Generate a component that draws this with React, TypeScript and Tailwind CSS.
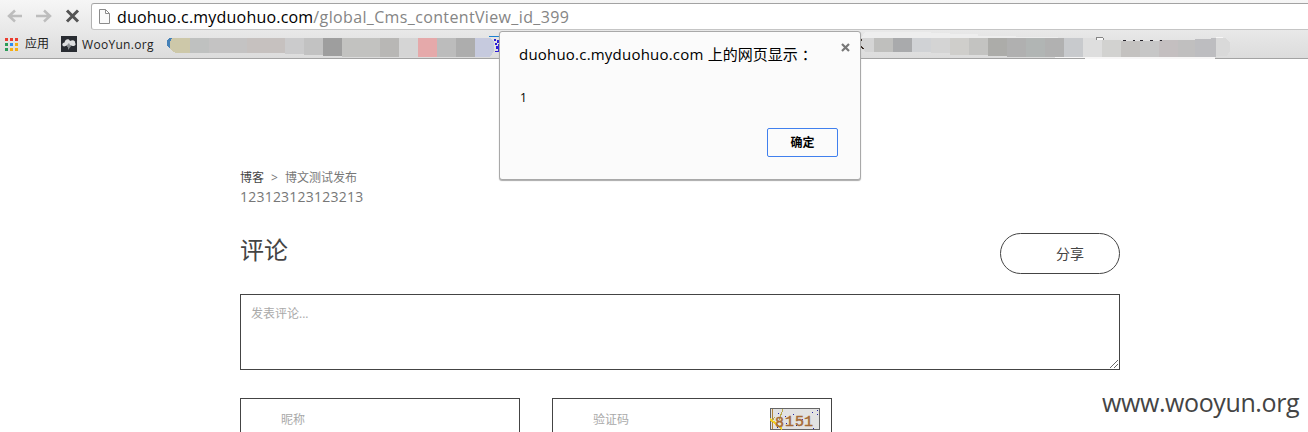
import React from 'react';

type Block = [x: number, y: number, w: number, h: number, fill: string];

const leftBlocks: Block[] = [
  [190, 8, 19, 15, '#bfc1c0'],
  [209, 8, 38, 15, '#c4c3c3'],
  [247, 8, 38, 15, '#c6c1bf'],
  [285, 8, 19, 16, '#cbcbcc'],
  [304, 8, 19, 17, '#c2c2c2'],
  [323, 8, 19, 18, '#9e9e9e'],
  [342, 8, 38, 19, '#c2c2c0'],
  [380, 8, 19, 19, '#b8b7b5'],
  [399, 8, 19, 19, '#d5d5d5'],
  [418, 8, 19, 19, '#e5a9aa'],
  [437, 8, 19, 19, '#bcbcbc'],
  [456, 8, 19, 19, '#adadad'],
];

const rightBlocks: Block[] = [
  [874, 8, 19, 14, '#bfbfbd'],
  [893, 8, 19, 14, '#a9aaac'],
  [912, 8, 19, 14, '#d0d2d5'],
  [931, 8, 19, 15, '#d4d4d4'],
  [950, 8, 19, 17, '#cfcecb'],
  [969, 8, 19, 17, '#c3c3c1'],
  [988, 8, 19, 18, '#acaca9'],
  [1007, 8, 19, 19, '#b0b0b0'],
  [1026, 8, 19, 19, '#b1b5b4'],
  [1045, 8, 19, 19, '#b1b1b1'],
  [1064, 8, 19, 19, '#c8cacd'],
  [1083, 8, 19, 20, '#dedede'],
  [1102, 10, 19, 17, '#d2d2d0'],
  [1121, 11, 19, 16, '#c4c2c0'],
  [1140, 11, 19, 16, '#c7c7c7'],
  [1159, 10, 19, 17, '#c4bfc0'],
  [1178, 10, 17, 17, '#c0bfbf'],
  [1195, 9, 16, 18, '#bdbdc0'],
  [1211, 8, 5, 19, '#bdbdc0'],
];

const appColors = ['#ea3d2f', '#ea3d2f', '#ea3d2f', '#2b9c58', '#2d8bf0', '#f6ae12', '#2b9c58', '#f6ae12', '#f6ae12'];

function Mosaic() {
  return (
    <svg className="pointer-events-none absolute left-0 top-0" width="1308" height="29" shapeRendering="crispEdges">
      <path d="M172 8h-3l-2 3v4l2 3h3z" fill="#4581b8" />
      <path d="M171 18l2 3h2v-3z" fill="#f1c83b" />
      <path d="M190 8h-18l-2 4v6l3 4 4 1h13z" fill="#cdc8a9" />
      {leftBlocks.map(([x, y, w, h, f]) => (
        <rect key={x} x={x} y={y} width={w} height={h} fill={f} />
      ))}
      <path d="M475 8h16l3 4v9l-4 6h-15z" fill="#c6cade" />
      <path d="M489 6h11v1h-11z" fill="#1c80d0" />
      <path d="M494 9h2v2h-2zM497 10h2v3h-2zM495 13h2v2h-2zM498 14h2v2h-2zM496 16h3v3h-3zM498 19h2v2h-2zM495 21h5v1h-5z" fill="#2c1bd5" />
      <path d="M861 8l4-6h66v1h19v1h28v2h38v1h42v1z" fill="#eeeeee" />
      <path d="M874 8h-13v9l4 5h9z" fill="#d5d5d5" />
      <path d="M861 9h1v2h-1zM861 16h1v1h1v1h1v1h-2v-1h-1z" fill="#34261f" />
      {rightBlocks.map(([x, y, w, h, f]) => (
        <rect key={x} x={x} y={y} width={w} height={h} fill={f} />
      ))}
      <path d="M1096 8h7v2h-7z" fill="#f9f9f9" />
      <path d="M1096 7h7v1h1v2h-1V8h-6v2h-1z" fill="#858585" />
      <path d="M1123 10h3v1h-3zM1133 10h2v1h-2zM1140 10h3v1h-3zM1150 10h3v1h-3zM1160 10h2v1h-2z" fill="#26242b" />
      <path d="M1216 8h10l4 5v8l-3 5h-11z" fill="#d9d9d9" />
      <path d="M1216 7h7v1h-7zM1055 27h160v2h-130v-1h-30z" fill="#f7f6f6" />
    </svg>
  );
}

function Toolbar() {
  return (
    <header className="flex h-[59px] flex-col border-b border-[#a3a3a3] bg-gradient-to-b from-[#f6f6f6] to-[#dcdcdc]">
      <div className="flex h-[30px] items-start">
        <nav className="flex w-[91px] gap-[13px] pl-[7px] pt-[9px]">
          <svg width="16" height="14" fill="none" stroke="#bdbdbd" strokeWidth="2.5">
            <path d="M15 7H2M8 1.500 2 7l6 5.500" />
          </svg>
          <svg width="16" height="14" fill="none" stroke="#bdbdbd" strokeWidth="2.5">
            <path d="M0 7h14M8 1.500 14 7l-6 5.500" />
          </svg>
          <svg width="15" height="14" fill="none" stroke="#545454" strokeWidth="3">
            <path d="m2 1.500 11 11m0-11-11 11" />
          </svg>
        </nav>
        <div className="mt-[3px] flex h-[27px] flex-1 items-center rounded-l-[3px] border border-r-0 border-[#b1b1b1] border-t-[#a3a3a3] border-b-[#c5c5c5] bg-white pl-[6px]">
          <svg width="13" height="16" fill="#fafafa" stroke="#8b8b8b" className="shrink-0">
            <path d="M1.500.5h6l4 4v10h-10zM7.500.5v4h4" />
          </svg>
          <span className="ml-[6px] mt-px whitespace-nowrap text-[16px] leading-6 tracking-[0.2px] text-black">
            duohuo.c.myduohuo.com
            <span className="tracking-[0.36px] text-[#858585]">/global_Cms_contentView_id_399</span>
          </span>
        </div>
      </div>
      <div className="relative flex h-[28px] items-center">
        <svg width="13" height="13" className="ml-[5px]" shapeRendering="crispEdges">
          {appColors.map((c, i) => (
            <rect key={i} x={(i % 3) * 5} y={Math.floor(i / 3) * 5} width="3" height="3" fill={c} />
          ))}
        </svg>
        <span className="ml-[7px] w-[36px] text-[12px] leading-4 text-[#222]">应用</span>
        <svg width="16" height="16">
          <rect width="16" height="16" fill="#292c32" />
          <path d="M3 10.500c-3-1-1.500-4 .5-4C4 3 8 2 9 5c3-2 6 0 5 2 1.500 1.500 0 3-2 3l-4-.5-1 2-1-2z" fill="#dedfe0" />
          <path d="m8 7-3 3h2v4l4-5H9z" fill="#8c9094" />
        </svg>
        <span className="ml-[5px] mt-px text-[12px] leading-4 tracking-[0.3px] text-[#222]">WooYun.org</span>
        <Mosaic />
      </div>
    </header>
  );
}

function AlertDialog() {
  return (
    <div
      role="dialog"
      className="absolute left-[499px] top-[31px] flex h-[149px] w-[362px] flex-col rounded-[3px] border border-[#a9a9a9] bg-[#fbfbfb] pl-[19px] pr-[22px] text-black shadow-[0_1px_1px_#aaaaaa]"
    >
      <button className="absolute right-[10px] top-[11px]" aria-label="Close">
        <svg width="9" height="9" className="block" stroke="#777" strokeWidth="2.2">
          <path d="m1 1 7 7m0-7-7 7" />
        </svg>
      </button>
      <h1 className="mt-[11px] whitespace-nowrap text-[15px] leading-[22px]">
        <span className="tracking-[0.21px]">duohuo.c.myduohuo.com </span>上的网页显示
        <span className="ml-[4px]">：</span>
      </h1>
      <p className="ml-px mt-[25px] text-[12px] leading-4">1</p>
      <button className="mt-[22px] h-[29px] w-[71px] self-end rounded-[2px] border border-[#4080ee] text-[12px] font-bold leading-4">
        确定
      </button>
    </div>
  );
}

function Captcha() {
  return (
    <svg width="50" height="24" className="shrink-0 overflow-visible" shapeRendering="crispEdges">
      <rect x=".5" y=".5" width="49" height="21" fill="#e2e2e2" stroke="#666" />
      <path d="M2.500 1v20" stroke="#b28338" />
      <path d="M13 1 9 12M5 9l-3 4" stroke="#b9aa4d" fill="none" />
      <path d="m0 11 12 10" stroke="#f0cf24" strokeWidth="2" />
      <path d="M8 5h1v1H8zM15 8h1v1h-1zM23 6h1v1h-1zM36 10h1v1h-1zM42 4h1v1h-1zM47 2h1v1h-1zM47 6h1v1h-1zM26 17h1v1h-1zM32 11h1v1h-1zM39 17h1v1h-1zM43 20h1v1h-1zM16 15h1v1h-1zM7 19h1v1H7z" fill="#2725a4" />
      <g fill="#a66b35" stroke="#a66b35" strokeWidth=".5" fontFamily="Liberation Mono, monospace" fontSize="15">
        <text x="5" y="19">8</text>
        <text x="15" y="18">1</text>
        <text x="25" y="18">5</text>
        <text x="34" y="18">1</text>
      </g>
    </svg>
  );
}

export default function App() {
  return (
    <div className="relative h-[432px] w-[1308px] overflow-hidden bg-white font-['Open_Sans','Noto_Sans_CJK_SC',sans-serif]">
      <Toolbar />
      <main className="ml-[240px] w-[880px] pt-[110px]">
        <div className="flex h-[18px] items-center whitespace-pre text-[12px] text-[#777]">
          <span className="text-[#444]">博客</span>
          <span className="w-[21px] text-center">&gt;</span>
          <span>博文测试发布</span>
        </div>
        <p className="text-[14px] leading-5 tracking-[0.22px] text-[#777]">123123123123213</p>
        <div className="mt-[26px] flex h-[41px] justify-between">
          <h2 className="text-[24px] leading-[34px] text-[#444]">评论</h2>
          <button className="h-[41px] w-[120px] rounded-full border border-[#444] pl-5 text-[14px] text-[#444]">分享</button>
        </div>
        <div className="relative mt-[20px] h-[76px] border border-[#444] px-[10px] pt-[10px] text-[12px] leading-[18px] text-[#a9a9a9]">
          发表评论...
          <svg className="absolute bottom-[1px] right-[1px]" width="8" height="8" stroke="#666">
            <path d="m0 8 8-8M4 8l4-4" />
          </svg>
        </div>
        <div className="mt-[28px] flex gap-[32px] text-[12px] leading-[18px] text-[#a9a9a9]">
          <div className="h-[42px] w-[280px] border border-[#444] pl-[40px] pt-[12px]">昵称</div>
          <div className="flex h-[42px] w-[280px] justify-between border border-[#444] pl-[40px] pr-[11px]">
            <span className="pt-[12px]">验证码</span>
            <div className="pt-[9px]">
              <Captcha />
            </div>
          </div>
        </div>
      </main>
      <AlertDialog />
      <div className="absolute left-[1102px] top-[385px] whitespace-nowrap text-[25px] leading-[34px] tracking-[-0.4px] text-[#444]">
        www.wooyun.org
      </div>
    </div>
  );
}
